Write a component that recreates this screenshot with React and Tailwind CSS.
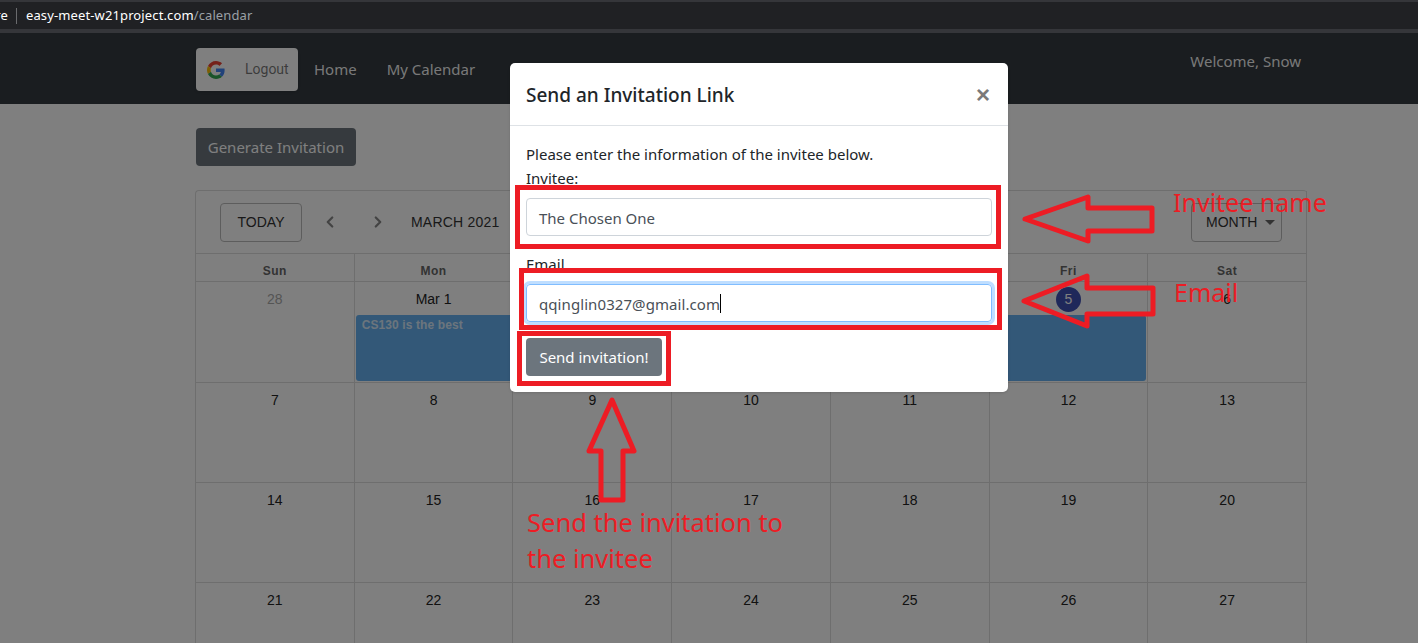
import React from "react";
import { ChevronLeft, ChevronRight } from "lucide-react";

const days = ["Sun", "Mon", "Tue", "Wed", "Thu", "Fri", "Sat"];
const firstRow = ["28", "Mar 1", "2", "3", "4", "5", "6"];
const weeks = [
    ["7", "8", "9", "10", "11", "12", "13"],
    ["14", "15", "16", "17", "18", "19", "20"],
    ["21", "22", "23", "24", "25", "26", "27"],
];
const colStarts = ["col-start-1", "col-start-2", "col-start-3", "col-start-4", "col-start-5", "col-start-6", "col-start-7"];

const GoogleIcon = () => (
    <svg viewBox="0 0 48 48" className="w-[18px] h-[18px]">
        <path fill="#EA4335" d="M24 9.5c3.54 0 6.71 1.22 9.21 3.6l6.85-6.85C35.9 2.38 30.47 0 24 0 14.62 0 6.51 5.38 2.56 13.22l7.98 6.19C12.43 13.72 17.74 9.5 24 9.5z" />
        <path fill="#4285F4" d="M46.98 24.55c0-1.57-.15-3.09-.38-4.55H24v9.02h12.94c-.58 2.96-2.26 5.48-4.78 7.18l7.73 6c4.51-4.18 7.09-10.36 7.09-17.65z" />
        <path fill="#FBBC05" d="M10.53 28.59c-.48-1.45-.76-2.99-.76-4.59s.27-3.14.76-4.59l-7.98-6.19C.92 16.46 0 20.12 0 24c0 3.88.92 7.54 2.56 10.78l7.97-6.19z" />
        <path fill="#34A853" d="M24 48c6.48 0 11.93-2.13 15.89-5.81l-7.73-6c-2.15 1.45-4.92 2.3-8.16 2.3-6.26 0-11.57-4.22-13.47-9.91l-7.98 6.19C6.51 42.62 14.62 48 24 48z" />
    </svg>
);

const Annotations = () => (
    <>
        <div className="absolute left-[515px] top-[185px] w-[486px] h-[64px] border-[5px] border-[#ed1c24]" />
        <div className="absolute left-[519px] top-[268px] w-[483px] h-[62px] border-[5px] border-[#ed1c24]" />
        <div className="absolute left-[517px] top-[331px] w-[154px] h-[55px] border-[5px] border-[#ed1c24]" />

        <svg className="absolute left-0 top-0 w-[1418px] h-[643px] pointer-events-none" viewBox="0 0 1418 643" fill="none" stroke="#ed1c24" strokeWidth="5" strokeLinejoin="round">
            <path d="M1025 219 L1088 197 L1088 208 L1152 208 L1152 231 L1088 231 L1088 241 Z" />
            <path d="M1024 301 L1087 276 L1087 288 L1153 288 L1153 314 L1087 314 L1087 326 Z" />
            <path d="M612 400 L634 451 L623 451 L623 500 L601 500 L601 451 L589 451 Z" />
        </svg>

        <span className="absolute left-[1173px] top-[185px] text-[25px] leading-[34px] text-[#ed1c24] whitespace-nowrap">Invitee name</span>
        <span className="absolute left-[1174px] top-[275px] text-[25px] leading-[34px] text-[#ed1c24] whitespace-nowrap">Email</span>
        <span className="absolute left-[527px] top-[504px] w-[280px] text-[25.5px] leading-[36px] text-[#ed1c24]">
            Send the invitation to the invitee
        </span>
    </>
);

const App = () => {
    return (
        <div className="relative w-[1418px] h-[643px] overflow-hidden flex flex-col bg-white font-['Noto_Sans',sans-serif]">

            {/* Browser address bar */}
            <div className="h-[33px] shrink-0 bg-[#202124] border-t-2 border-b-4 border-[#35363a] flex items-center text-[13px] text-[#9aa0a6] tracking-[0.12px]">
                <span className="w-[8px] flex justify-end overflow-hidden text-white whitespace-nowrap">re</span>
                <span className="ml-[8px] w-px h-[16px] bg-[#6a6b6e]" />
                <span className="ml-[9px] text-white">easy-meet-w21project.com</span>
                <span>/calendar</span>
            </div>

            <div className="relative flex-1 min-h-0">

                {/* Navbar */}
                <div className="h-[71px] bg-[#343a40] pl-[196px] pr-[117px] flex items-start">
                    <div className="mt-[15px] w-[102px] h-[43px] bg-white rounded-sm flex items-center pl-[11px] shadow">
                        <GoogleIcon />
                        <span className="ml-[20px] text-[14px] text-black/55 font-['Roboto',sans-serif]">Logout</span>
                    </div>
                    <span className="ml-[16px] mt-[24px] text-[15px] leading-[24px] text-white/95">Home</span>
                    <span className="ml-[30px] mt-[24px] text-[15px] leading-[24px] text-white/95">My Calendar</span>
                    <span className="ml-auto mt-[16px] text-[15px] leading-[24px] text-white/95">Welcome, Snow</span>
                </div>

                {/* Page */}
                <div className="pl-[196px] pt-[24px]">
                    <button className="w-[160px] h-[38px] bg-[#6c757d] rounded text-white text-[15px]">Generate Invitation</button>

                    <div className="mt-[24px] -ml-px w-[1112px] border-l border-t border-[#ddd] rounded-t font-['Liberation_Sans',sans-serif]">
                        <div className="h-[62px] flex items-center pl-[24px] pr-[24px] border-r border-[#ddd] text-[14px] text-[#333]">
                            <div className="w-[82px] h-[39px] border border-[#bbb] rounded flex items-center justify-center">TODAY</div>
                            <ChevronLeft size={18} strokeWidth={3} className="ml-[19px] text-[#888]" />
                            <ChevronRight size={18} strokeWidth={3} className="ml-[30px] text-[#888]" />
                            <span className="ml-[24px] tracking-[0.2px]">MARCH 2021</span>
                            <div className="ml-auto w-[91px] h-[39px] border border-[#bbb] rounded flex items-center pl-[14px]">
                                MONTH
                                <span className="ml-[8px] w-0 h-0 border-x-[5px] border-x-transparent border-t-[5px] border-t-[#666]" />
                            </div>
                        </div>

                        {/* Weekday header */}
                        <div className="grid grid-cols-7 h-[29px] border-t border-b border-[#ddd]">
                            {days.map((d) => (
                                <div key={d} className="border-r border-[#ddd] pt-[6px] flex items-center justify-center text-[12px] font-bold tracking-[0.5px] text-[#666]">
                                    {d}
                                </div>
                            ))}
                        </div>

                        {/* First week, event sits in its second grid row */}
                        <div className="grid grid-cols-7 grid-rows-[33px_68px] h-[101px] border-b border-[#ddd]">
                            {firstRow.map((d, i) => (
                                <div key={d} className={`${colStarts[i]} row-start-1 row-span-2 border-r border-[#ddd] pt-[8px] text-center text-[14px] leading-[18px] ${i === 0 ? "text-[#aaa]" : "text-[#222]"}`}>
                                    {d === "5" ? (
                                        <span className="inline-flex items-center justify-center w-[25px] h-[25px] -mt-[4px] rounded-full bg-[#3f51b5] text-white">5</span>
                                    ) : d}
                                </div>
                            ))}
                            <div className="col-start-2 col-span-5 row-start-2 ml-[1px] mr-[2px] mb-[2px] rounded-[3px] bg-[#66b1f0] px-[6px] pt-[1px] text-[12px] leading-[18px] font-bold tracking-[0.1px] text-white/75">
                                CS130 is the best
                            </div>
                        </div>

                        {weeks.map((week) => (
                            <div key={week[0]} className="grid grid-cols-7 h-[100px] border-b border-[#ddd]">
                                {week.map((d) => (
                                    <div key={d} className="border-r border-[#ddd] pt-[8px] text-center text-[14px] leading-[18px] text-[#222]">{d}</div>
                                ))}
                            </div>
                        ))}
                    </div>
                </div>

                {/* Modal */}
                <div className="absolute inset-0 bg-black/50 pl-[100px] pt-[30px] flex justify-center items-start">
                    <div className="w-[498px] bg-white rounded-[5px] shadow-sm">
                        <div className="h-[63px] pl-[16px] pr-[18px] pt-[2px] border-b border-[#dee2e6] flex items-center justify-between">
                            <h5 className="text-[19px] font-medium text-[#212529]">Send an Invitation Link</h5>
                            <span className="text-[24px] font-bold text-[#7a7a7a] font-['Liberation_Sans',sans-serif]">×</span>
                        </div>
                        <div className="p-[16px] text-[15px] leading-[24px] text-[#212529]">
                            <p>Please enter the information of the invitee below.</p>
                            <p className="mb-[8px]">Invitee:</p>
                            <div className="h-[38px] w-[466px] border border-[#ced4da] rounded px-[12px] pt-[1px] flex items-center text-[#495057]">The Chosen One</div>
                            <p className="mt-[16px] mb-[8px]">Email</p>
                            <div className="h-[38px] w-[466px] border border-[#80bdff] rounded px-[12px] pt-[1px] flex items-center text-[#495057] tracking-[0.08px] shadow-[0_0_0_3px_rgba(0,123,255,0.25)]">
                                qqinglin0327@gmail.com
                                <span className="w-px h-[19px] bg-black" />
                            </div>
                            <button className="mt-[16px] block w-[136px] h-[38px] bg-[#6c757d] rounded text-white">Send invitation!</button>
                        </div>
                    </div>
                </div>
            </div>

            <Annotations />
        </div>
    );
};

export default App;
